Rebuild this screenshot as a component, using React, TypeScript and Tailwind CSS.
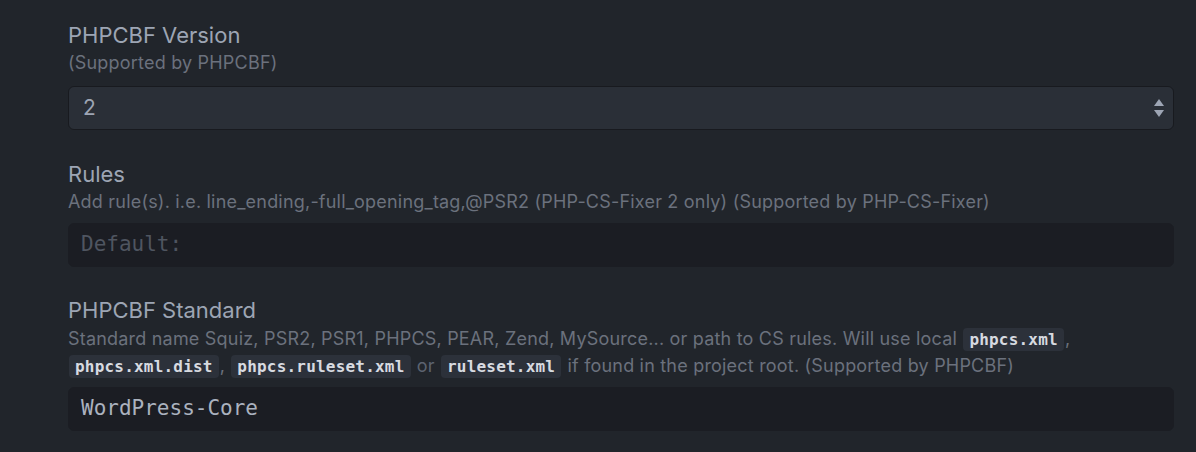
import React from 'react';

const sans = { fontFamily: 'Inter, "Noto Sans", sans-serif' };

function Code({ children }: { children: React.ReactNode }) {
  return (
    <code className="mx-[1px] rounded-[4px] bg-[#2c313a] px-[6px] py-[2px] font-['DejaVu_Sans_Mono',monospace] text-[16px] font-semibold text-[#d7dae0]">
      {children}
    </code>
  );
}

export default function App() {
  return (
    <div
      className="h-[452px] w-[1196px] overflow-hidden bg-[#21252b] pl-[68px] pr-[22px] pt-[21px] antialiased"
      style={sans}
    >
      {/* PHPCBF Version */}
      <div>
        <div className="text-[22px] leading-[28px] text-[#9da5b4]">PHPCBF Version</div>
        <div className="text-[18px] leading-[28px] tracking-[0.2px] text-[#6b717d]">(Supported by PHPCBF)</div>
        <div className="relative mt-[9px] flex h-[44px] items-center rounded-[6px] border border-[#181a1f] bg-[#2a2f37] pl-[14px] text-[21px] text-[#9da5b4]">
          2
          <svg className="absolute right-[8px] top-[11px]" width="12" height="20" viewBox="0 0 12 20">
            <path d="M6 1 L11 8 H1 Z" fill="#9da5b4" />
            <path d="M6 19 L11 12 H1 Z" fill="#9da5b4" />
          </svg>
        </div>
      </div>

      {/* Rules */}
      <div className="mt-[30px]">
        <div className="text-[22px] leading-[28px] text-[#9da5b4]">Rules</div>
        <div className="text-[18px] leading-[28px] tracking-[0.2px] text-[#6b717d]">
          Add rule(s). i.e. line_ending,-full_opening_tag,@PSR2 (PHP-CS-Fixer 2 only) (Supported by PHP-CS-Fixer)
        </div>
        <div className="mt-[7px] flex h-[44px] items-center rounded-[6px] border border-[#1b1d23] bg-[#1b1d23] pl-[12px] font-['DejaVu_Sans_Mono',monospace] text-[21px] text-[#4f5560]">
          Default:
        </div>
      </div>

      {/* PHPCBF Standard */}
      <div className="mt-[29px]">
        <div className="text-[22px] leading-[28px] text-[#9da5b4]">PHPCBF Standard</div>
        <div className="mt-[2px] text-[18px] leading-[26px] tracking-[0.2px] text-[#6b717d]">
          Standard name Squiz, PSR2, PSR1, PHPCS, PEAR, Zend, MySource... or path to CS rules. Will use local{' '}
          <Code>phpcs.xml</Code>,<br />
          <Code>phpcs.xml.dist</Code>, <Code>phpcs.ruleset.xml</Code> <span className="text-[#5c6370]">or</span>{' '}
          <Code>ruleset.xml</Code> if found in the project root. (Supported by PHPCBF)
        </div>
        <div className="mt-[7px] flex h-[44px] items-center rounded-[6px] border border-[#1b1d23] bg-[#1b1d23] pl-[12px] font-['DejaVu_Sans_Mono',monospace] text-[21px] text-[#abb2bf]">
          WordPress-Core
        </div>
      </div>
    </div>
  );
}
